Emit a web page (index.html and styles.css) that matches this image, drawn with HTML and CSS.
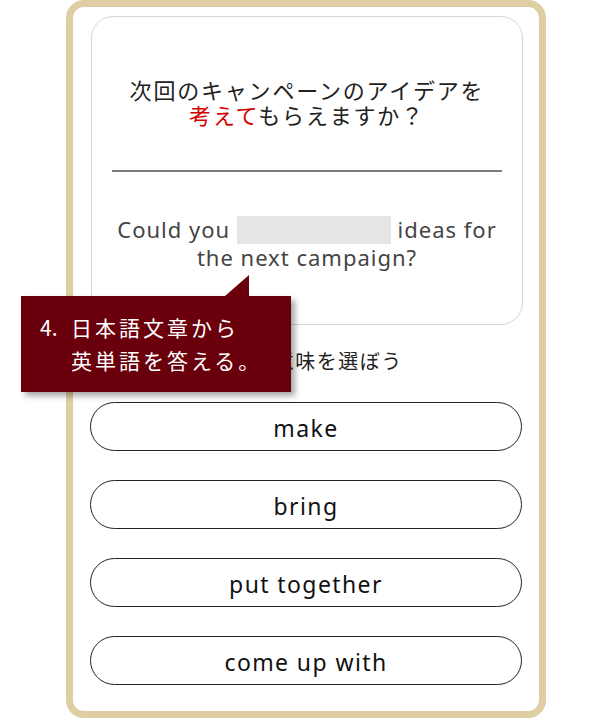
FILE: index.html
```html
<!DOCTYPE html>
<html lang="ja">
<head>
    <meta charset="UTF-8">
    <meta name="viewport" content="width=device-width, initial-scale=1.0">
    <title>英単語クイズ</title>
    <link rel="stylesheet" href="styles.css">
</head>
<body>
    <div class="frame">
        <div class="card">
            <p class="question">次回のキャンペーンのアイデアを<br><span class="red">考えて</span>もらえますか？</p>
            <div class="line"></div>
            <p class="english">Could you <span class="blank"></span> ideas for<br>the next campaign?</p>
        </div>
        <p class="prompt">正しい意味を選ぼう</p>
        <div class="choices">
            <div class="choice">make</div>
            <div class="choice">bring</div>
            <div class="choice">put together</div>
            <div class="choice">come up with</div>
        </div>
        <!-- 吹き出し -->
        <div class="balloon">
            <span class="num">4.</span>
            <span class="msg">日本語文章から<br>英単語を答える。</span>
        </div>
    </div>
</body>
</html>
```

FILE: styles.css
```css
* {
    margin: 0;
    padding: 0;
    box-sizing: border-box;
}

body {
    background: #fff;
    font-family: "Noto Sans", "Noto Sans CJK JP", sans-serif;
    color: #222;
}

.frame {
    position: relative;
    width: 480px;
    height: 718px;
    margin-left: 66px;
    border: 7px solid #dfcea3;
    border-radius: 18px;
    padding: 9px 17px 0 17px;
}

.card {
    width: 432px;
    height: 309px;
    margin-left: 1px;
    border: 1px solid #d6d6d6;
    border-radius: 22px;
    padding: 60px 20px 0;
    text-align: center;
}

.question {
    font-family: "Noto Sans CJK JP", sans-serif;
    font-size: 22px;
    line-height: 25px;
    letter-spacing: 1.8px;
    color: #222;
}

.question .red {
    color: #d40000;
}

.line {
    height: 2px;
    background: #7d7d7d;
    margin-top: 43px;
}

.english {
    margin-top: 44px;
    font-size: 22px;
    line-height: 26px;
    letter-spacing: 1px;
    color: #454545;
}

.blank {
    display: inline-block;
    width: 154px;
    height: 28px;
    background: #e5e5e5;
    vertical-align: -6px;
}

.prompt {
    margin-top: 22px;
    text-align: center;
    font-family: "Noto Sans CJK JP", sans-serif;
    font-size: 20px;
    line-height: 28px;
    letter-spacing: 1.5px;
    color: #222;
}

.choices {
    display: flex;
    flex-direction: column;
    gap: 29px;
    margin-top: 27px;
}

.choice {
    height: 49px;
    border: 1.5px solid #222;
    border-radius: 25px;
    display: flex;
    align-items: center;
    justify-content: center;
    padding-top: 3px;
    font-size: 23px;
    letter-spacing: 1.4px;
    color: #111;
}

.balloon {
    position: absolute;
    left: -52px;
    top: 289px;
    width: 270px;
    height: 96px;
    background: #6a000b;
    box-shadow: 4px 4px 6px rgba(0, 0, 0, 0.35);
    display: flex;
    padding: 15px 0 0 19px;
    color: #fff;
    font-family: "Noto Sans CJK JP", sans-serif;
    font-size: 21px;
    line-height: 33px;
    letter-spacing: 3px;
}

.balloon::before {
    content: "";
    position: absolute;
    left: 204px;
    top: -21px;
    width: 0;
    height: 0;
    border-left: 24px solid transparent;
    border-bottom: 21px solid #6a000b;
}

.balloon .num {
    width: 31px;
    flex-shrink: 0;
    letter-spacing: 0;
}
```
